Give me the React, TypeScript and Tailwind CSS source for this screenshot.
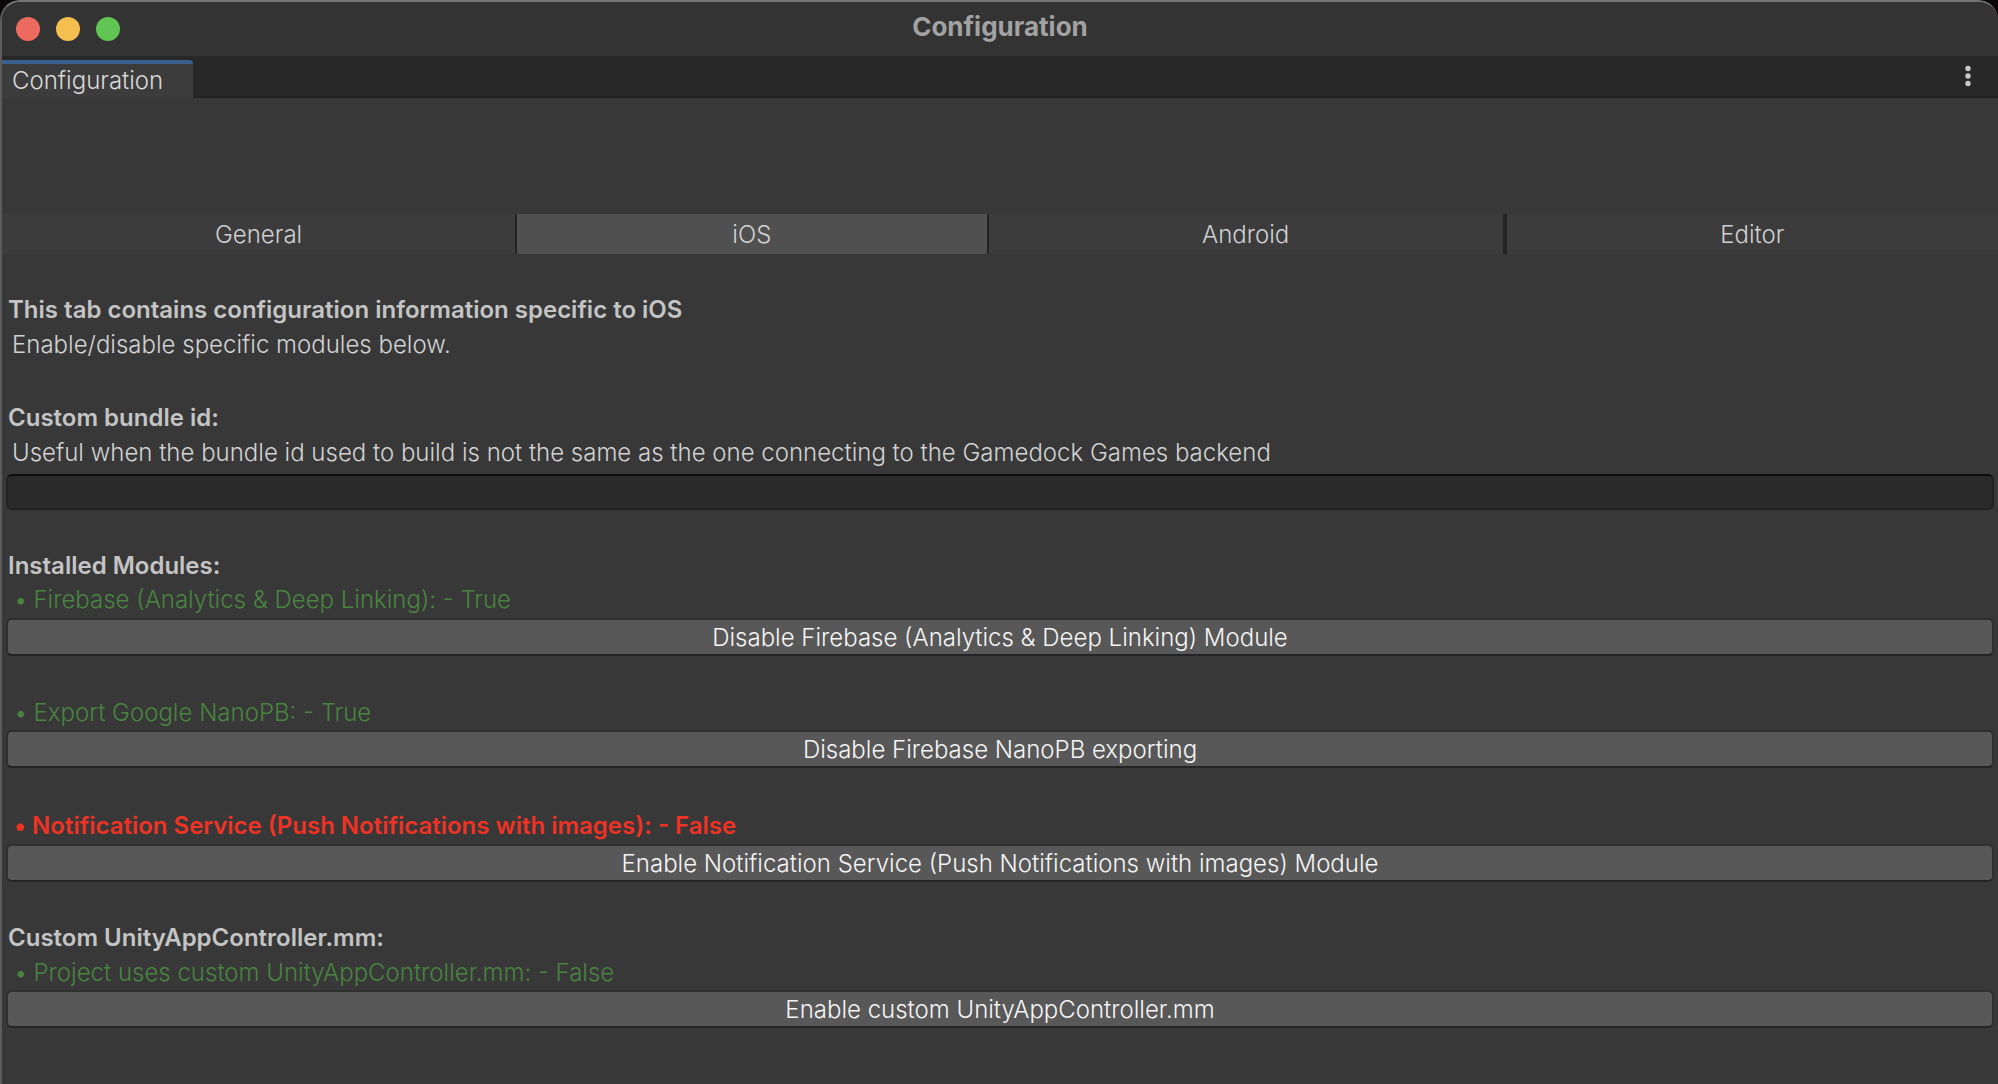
import { useState } from 'react';

const tabs = [
  { name: 'General', style: 'flex-[515] border-r-2' },
  { name: 'iOS', style: 'flex-[471] border-r-2' },
  { name: 'Android', style: 'flex-[516] border-r-4' },
  { name: 'Editor', style: 'flex-[493]' },
];

function Heading({ children }: { children: string }) {
  return <h2 className="px-0.5 font-semibold text-[#c4c4c4]">{children}</h2>;
}

function Note({ children }: { children: string }) {
  return <p className="mt-px px-1.5 text-[#d2d2d2]">{children}</p>;
}

function Status({ children, failed = false }: { children: string; failed?: boolean }) {
  return (
    <p
      className={
        failed
          ? 'flex gap-1.5 px-2 font-semibold text-[#ee3224]'
          : 'flex gap-1.5 px-2 text-[#48843f]'
      }
    >
      <span>•</span>
      <span>{children}</span>
    </p>
  );
}

function ActionButton({ children }: { children: string }) {
  return (
    <button
      type="button"
      className="block h-[38px] w-full rounded-md border-2 border-[#303030] border-b-[#242424] bg-[#585858] pt-0.5 text-center leading-8 text-[#f4f4f4]"
    >
      {children}
    </button>
  );
}

export default function App() {
  const [active, setActive] = useState('iOS');
  const [bundleId, setBundleId] = useState('');

  return (
    <div className="min-h-screen bg-[#0b0709] font-['Inter',sans-serif] text-2xl leading-[34px] font-light">
      <div className="flex min-h-screen flex-col overflow-hidden rounded-t-[20px] border-t-2 border-l-2 border-t-[#747474] border-l-[#5c5c5c] bg-[#383838]">
        <header className="grid h-[54px] grid-cols-[1fr_auto_1fr] items-center bg-[#333333]">
          <div className="flex gap-4 px-3.5">
            <button type="button" aria-label="Close" className="size-6 rounded-full bg-[#ed6a5e]" />
            <button type="button" aria-label="Minimize" className="size-6 rounded-full bg-[#f5bf4f]" />
            <button type="button" aria-label="Zoom" className="size-6 rounded-full bg-[#61c554]" />
          </div>
          <h1 className="pb-1 text-[26px] font-bold text-[#a2a2a2]">Configuration</h1>
        </header>

        <div className="flex h-[42px] items-stretch justify-between border-b-2 border-[#232323] bg-[#282828] pt-1">
          <div className="-mb-0.5 rounded-tr-sm border-t-4 border-[#3a5f8c] bg-[#3c3c3c] pr-[30px] pl-2.5 text-[#d8d8d8]">
            Configuration
          </div>
          <button type="button" aria-label="Window menu" className="px-6 pb-1">
            <svg width="12" height="24" viewBox="0 0 12 24" fill="#c8c8c8">
              <circle cx="6" cy="4.5" r="2.7" />
              <circle cx="6" cy="12" r="2.7" />
              <circle cx="6" cy="19.5" r="2.7" />
            </svg>
          </button>
        </div>

        <nav className="mt-[116px] flex h-10">
          {tabs.map((tab) => (
            <button
              key={tab.name}
              type="button"
              aria-pressed={active === tab.name}
              onClick={() => setActive(tab.name)}
              className={`${tab.style} border-[#232323] pt-0.5 text-[#d0d0d0] ${
                active === tab.name ? 'bg-[#505050]' : 'bg-[#3c3c3c]'
              }`}
            >
              {tab.name}
            </button>
          ))}
        </nav>

        <main className="flex flex-col px-1 pt-[39px] pb-14">
          <section>
            <Heading>This tab contains configuration information specific to iOS</Heading>
            <Note>Enable/disable specific modules below.</Note>
          </section>

          <section className="mt-[39px]">
            <Heading>Custom bundle id:</Heading>
            <Note>Useful when the bundle id used to build is not the same as the one connecting to the Gamedock Games backend</Note>
            <input
              type="text"
              aria-label="Custom bundle id"
              value={bundleId}
              onChange={(event) => setBundleId(event.target.value)}
              className="mt-1 block h-9 w-full rounded-md border-2 border-[#212121] border-t-[#0d0d0d] bg-[#2a2a2a] px-2 text-[#d2d2d2] outline-none"
            />
          </section>

          <section className="mt-[39px]">
            <Heading>Installed Modules:</Heading>
            <Status>Firebase (Analytics &amp; Deep Linking): - True</Status>
            <div className="mt-px">
              <ActionButton>Disable Firebase (Analytics &amp; Deep Linking) Module</ActionButton>
            </div>
          </section>

          <section className="mt-10">
            <Status>Export Google NanoPB: - True</Status>
            <ActionButton>Disable Firebase NanoPB exporting</ActionButton>
          </section>

          <section className="mt-[41px]">
            <Status failed>Notification Service (Push Notifications with images): - False</Status>
            <div className="mt-px">
              <ActionButton>Enable Notification Service (Push Notifications with images) Module</ActionButton>
            </div>
          </section>

          <section className="mt-[39px]">
            <Heading>Custom UnityAppController.mm:</Heading>
            <div className="mt-px">
              <Status>Project uses custom UnityAppController.mm: - False</Status>
            </div>
            <ActionButton>Enable custom UnityAppController.mm</ActionButton>
          </section>
        </main>
      </div>
    </div>
  );
}
